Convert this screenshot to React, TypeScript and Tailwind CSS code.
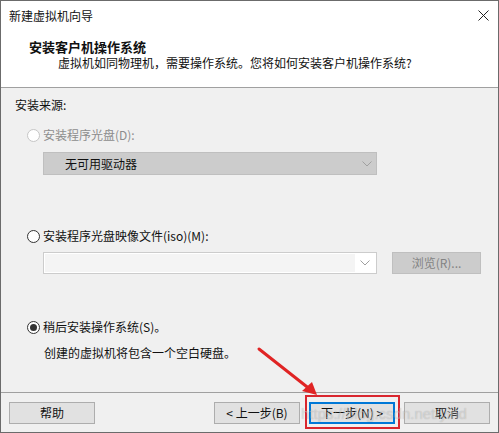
import React from "react";

const font = "font-['Microsoft_YaHei_UI','Noto_Sans_CJK_SC',sans-serif]";

function Chevron({ color }: { color: string }) {
  return (
    <svg width="10" height="6" viewBox="0 0 10 6" fill="none">
      <path d="M0.5 0.5 L5 5 L9.5 0.5" stroke={color} strokeWidth="1" />
    </svg>
  );
}

function Radio({ checked, disabled }: { checked?: boolean; disabled?: boolean }) {
  return (
    <span
      className={
        "flex h-[13px] w-[13px] shrink-0 items-center justify-center rounded-full border bg-white " +
        (disabled ? "border-[#c6c6c6]" : "border-[#333333]")
      }
    >
      {checked && <span className="h-[7px] w-[7px] rounded-full bg-[#333333]" />}
    </span>
  );
}

function Button({ label, primary }: { label: string; primary?: boolean }) {
  return (
    <div
      className={
        "flex h-[22px] w-[86px] items-center justify-center bg-[#e1e1e1] text-[12px] text-[#111] " +
        (primary ? "border-2 border-[#0078d7]" : "border border-[#adadad]")
      }
    >
      {label}
    </div>
  );
}

export default function App() {
  return (
    <div className={`relative flex h-[433px] w-[499px] flex-col overflow-hidden border border-[#6b6b6b] bg-white ${font} text-[12px] leading-[16px] text-[#111]`}>
      {/* Title bar */}
      <div className="flex h-[29px] items-center justify-between pl-[8px] pr-[9px]">
        <span>新建虚拟机向导</span>
        <svg width="11" height="11" viewBox="0 0 11 11">
          <path d="M0.5 0.5 L10.5 10.5 M10.5 0.5 L0.5 10.5" stroke="#222" strokeWidth="1" />
        </svg>
      </div>

      {/* Header */}
      <div className="flex h-[58px] flex-col border-b border-[#a0a0a0] pt-[9px]">
        <span className="pl-[28px] text-[13px] font-bold">安装客户机操作系统</span>
        <span className="pl-[57px]">虚拟机如同物理机，需要操作系统。您将如何安装客户机操作系统?</span>
      </div>

      {/* Body */}
      <div className="flex flex-1 flex-col bg-[#f0f0f0] pt-[9px]">
        <span className="pl-[14px]">安装来源:</span>

        <div className="mt-[14px] flex items-center gap-[3px] pl-[26px] text-[#8d8d8d]">
          <Radio disabled />
          <span>安装程序光盘(D):</span>
        </div>
        <div className="ml-[42px] mt-[9px] flex h-[23px] w-[334px] items-center justify-between border border-[#bfbfbf] bg-[#cccccc] pl-[21px] pr-[4px]">
          <span>无可用驱动器</span>
          <Chevron color="#a0a0a0" />
        </div>

        <div className="mt-[53px] flex items-center gap-[3px] pl-[26px]">
          <Radio />
          <span>安装程序光盘映像文件(iso)(M):</span>
        </div>
        <div className="mt-[8px] flex items-center pl-[42px]">
          <div className="flex h-[22px] w-[334px] items-center border border-[#cccccc] bg-white p-[1px]">
            <div className="h-full flex-1 bg-[#f4f4f4]" />
            <div className="flex w-[20px] justify-center">
              <Chevron color="#a0a0a0" />
            </div>
          </div>
          <div className="ml-[15px] flex h-[22px] w-[89px] items-center justify-center border border-[#bfbfbf] bg-[#cccccc] text-[#838383]">
            浏览(R)...
          </div>
        </div>

        <div className="mt-[45px] flex items-center gap-[3px] pl-[26px]">
          <Radio checked />
          <span>稍后安装操作系统(S)。</span>
        </div>
        <span className="mt-[10px] pl-[43px]">创建的虚拟机将包含一个空白硬盘。</span>

        <div className="flex-1" />

        {/* Footer */}
        <div className="flex h-[40px] items-start border-t border-[#a0a0a0] pl-[8px] pr-[8px] pt-[9px]">
          <Button label="帮助" />
          <div className="flex-1" />
          <div className="flex gap-[9px]">
            <Button label="< 上一步(B)" />
            <Button label="下一步(N) >" primary />
            <Button label="取消" />
          </div>
        </div>
      </div>

      {/* Annotation: red highlight and arrow */}
      <div className="pointer-events-none absolute left-[304px] top-[394px] h-[34px] w-[95px] border-2 border-[#d9262e]" />
      <svg className="pointer-events-none absolute left-0 top-0" width="499" height="433">
        <path d="M258 348 L310 389" stroke="#e02424" strokeWidth="3" strokeLinecap="round" />
        <path d="M316 394 L301 390 L311 381 Z" fill="#e02424" />
      </svg>

      {/* Watermark */}
      <span className="pointer-events-none absolute left-[300px] top-[403px] whitespace-nowrap font-['Liberation_Sans',sans-serif] text-[15px] leading-[20px] text-white/40 [text-shadow:0_0_1px_rgba(0,0,0,0.25)]">
        https://blog.csdn.net/yind
      </span>
    </div>
  );
}
